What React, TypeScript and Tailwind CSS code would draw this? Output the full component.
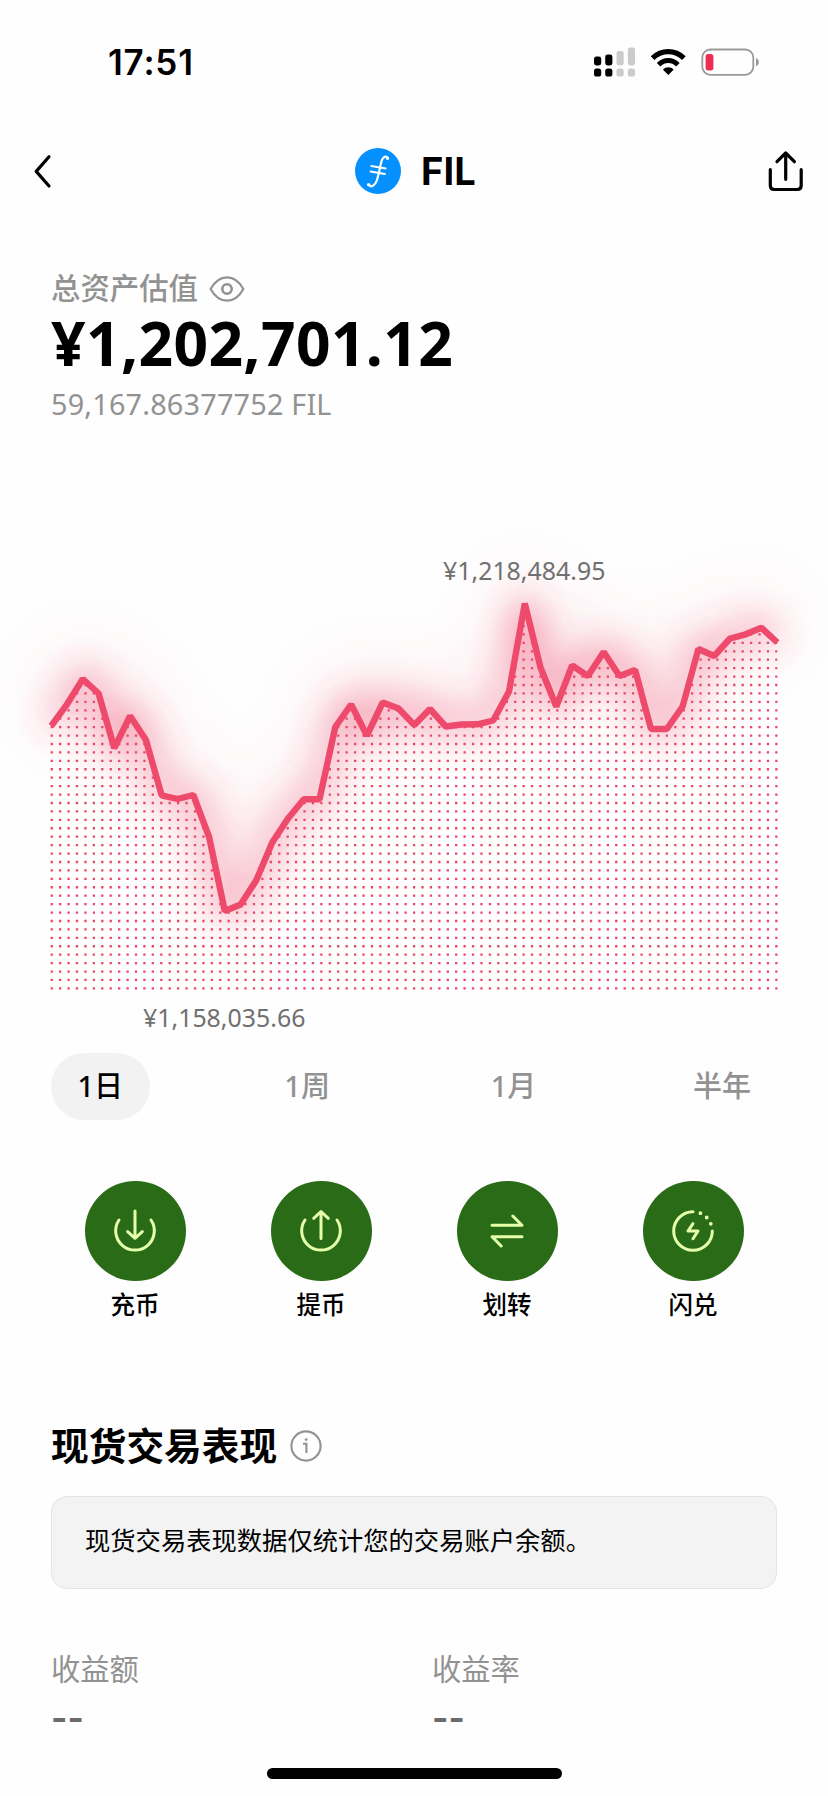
import type { ReactNode } from 'react';

const LEVELS = [
  726, 704.3, 679, 693.5, 748, 716, 740, 795.3, 799, 795, 837, 911, 904.5, 880, 842.5, 818.5,
  799.3, 799.3, 727, 704.5, 735.5, 702.5, 708.5, 725, 709, 726.5, 724.5, 724.3, 720.5, 691.5, 603.5, 667.5,
  706.5, 665.5, 676, 652, 676, 670, 729, 729, 706.5, 649, 656, 638.5, 634.3, 627.8, 642.5,
];
const TOP = 440;
const points = LEVELS.map((y, i) => `${(51.2 + i * 15.785).toFixed(1)},${y - TOP}`);
const line = 'M' + points.join('L');
const area = `${line}L780,552L48,552L48,286Z`;

function Chart() {
  const rows = Array.from({ length: 46 }, (_, i) => 548.4 - i * 8.428);
  return (
    <svg className="block h-[580px] w-[828px]" viewBox="0 0 828 580" fill="none">
      <defs>
        <filter id="glow" filterUnits="userSpaceOnUse" x="-100" y="-100" width="1028" height="800">
          <feGaussianBlur stdDeviation="18" />
        </filter>
        <filter id="haze" filterUnits="userSpaceOnUse" x="-140" y="-140" width="1108" height="900">
          <feGaussianBlur stdDeviation="36" />
        </filter>
        <clipPath id="below">
          <path d={area} />
        </clipPath>
      </defs>
      <path d={line} transform="translate(0 -14)" stroke="#ee4a6c" strokeWidth="9" filter="url(#haze)" opacity="0.5" />
      <path d={line} transform="translate(0 -2)" stroke="#ee4a6c" strokeWidth="9" filter="url(#glow)" opacity="0.9" />
      <g clipPath="url(#below)" stroke="#ec4668" strokeWidth="2.3">
        {rows.map((y) => (
          <path key={y} d={`M50.6 ${y}H778`} strokeDasharray="2.3 6.126" />
        ))}
      </g>
      <path d={line} stroke="#ee4a6c" strokeWidth="6.4" strokeLinejoin="bevel" />
    </svg>
  );
}

function StatusIcons() {
  return (
    <svg className="h-8 w-[170px]" viewBox="592 45.5 170 32" fill="none">
      <rect x="594" y="56" width="7.2" height="9" rx="2.4" fill="#000" />
      <rect x="605.2" y="54" width="7.2" height="11" rx="2.4" fill="#000" />
      <rect x="616.5" y="50.6" width="7.2" height="14.2" rx="2.4" fill="#cbcbcb" />
      <rect x="627.8" y="47" width="7.2" height="18" rx="2.4" fill="#cbcbcb" />
      <rect x="594" y="68" width="7.2" height="8" rx="2.6" fill="#000" />
      <rect x="605.2" y="68" width="7.2" height="8" rx="2.6" fill="#000" />
      <rect x="616.5" y="68" width="7.2" height="8" rx="2.6" fill="#cbcbcb" />
      <rect x="627.8" y="68" width="7.2" height="8" rx="2.6" fill="#cbcbcb" />
      <path d="M652.6 57.6C661.5 49 675 49 683.9 57.6" stroke="#000" strokeWidth="5.2" />
      <path d="M658.6 64.2C664.2 58.7 672.3 58.7 677.9 64.2" stroke="#000" strokeWidth="5" />
      <path d="M663 69.2C666 66 670.7 66 673.6 69.2L668.3 74.5Z" fill="#000" />
      <rect x="702.3" y="49" width="51" height="25.3" rx="8" stroke="#999" strokeWidth="1.8" />
      <rect x="705.6" y="53.5" width="7.8" height="16.4" rx="2.6" fill="#ee2d52" />
      <path d="M756 57.5C759.8 59 759.8 64.4 756 65.8Z" fill="#999" />
    </svg>
  );
}

function FilLogo() {
  return (
    <svg className="size-[46px]" viewBox="0 0 46 46" fill="none" stroke="#fff" strokeLinecap="round">
      <circle cx="23" cy="23" r="23" fill="#0590ff" stroke="none" />
      <path
        d="M33 10.4C31.8 7.6 28.2 8 26.6 13C25 18.5 23.6 27 21.8 32.5C20.2 37.5 16.2 40 13.2 36.8"
        strokeWidth="2.2"
      />
      <path d="M32.8 10.4h-.6M13.4 36.6h.6" strokeWidth="2.8" />
      <path d="M16.3 18L30.6 20.5M15.6 23.5L29.9 26" strokeWidth="1.8" />
    </svg>
  );
}

function Tab({ label, active }: { label: string; active?: boolean }) {
  return (
    <button
      className={
        active
          ? 'h-[67px] rounded-full bg-[#f2f2f2] px-[26.5px] pb-px text-[29px] font-medium text-black'
          : 'h-[67px] px-[26px] pb-px text-[29px] font-medium text-[#929292]'
      }
    >
      {label}
    </button>
  );
}

function Action({ label, children }: { label: string; children: ReactNode }) {
  return (
    <div className="flex w-[186px] flex-col items-center">
      <div className="flex size-[101px] items-center justify-center rounded-full bg-[#2a6b17]">
        <svg
          className="size-[50px]"
          viewBox="-25 -25 50 50"
          fill="none"
          stroke="#e5ffab"
          strokeWidth="3"
          strokeLinecap="round"
          strokeLinejoin="round"
        >
          {children}
        </svg>
      </div>
      <span className="mt-[6px] text-[24.5px] leading-9 font-medium">{label}</span>
    </div>
  );
}

function Metric({ label }: { label: string }) {
  return (
    <div className="flex flex-col">
      <span className="text-[29.3px] leading-10 text-[#929292]">{label}</span>
      <span className="mt-2 font-['Inter',sans-serif] text-[35px] leading-10 font-bold tracking-[0.2px] text-[#6c6c6c] [font-feature-settings:'calt'_0]">
        --
      </span>
    </div>
  );
}

export default function App() {
  return (
    <main className="flex h-[1796px] w-[828px] flex-col overflow-hidden bg-[#fefefe] font-['Noto_Sans','Noto_Sans_CJK_SC',sans-serif] text-black">
      <div className="flex h-[124px] shrink-0 items-center justify-between pr-[66px] pl-[108px]">
        <span className="font-['Inter',sans-serif] text-[35px] leading-none font-semibold tracking-[0.8px]">
          17:51
        </span>
        <StatusIcons />
      </div>

      <header className="grid h-[93px] shrink-0 grid-cols-[1fr_auto_1fr] items-center pr-6 pl-8">
        <svg className="h-9 w-5" viewBox="0 0 20 36" fill="none" stroke="#000" strokeWidth="3.2" strokeLinecap="round" strokeLinejoin="round">
          <path d="M17 3.8L4.2 18.4L17 33" />
        </svg>
        <div className="flex items-center gap-5 pr-[5px]">
          <FilLogo />
          <span className="font-['Inter',sans-serif] text-[38px] leading-none font-bold tracking-[0.1px]">FIL</span>
        </div>
        <svg className="mb-px h-11 w-9 justify-self-end" viewBox="0 0 36 44" fill="none" stroke="#000" strokeWidth="3.2" strokeLinecap="round" strokeLinejoin="round">
          <path d="M2.3 21.7V37.5Q2.3 41.5 6.3 41.5H29.2Q33.2 41.5 33.2 37.5V21.7M17.7 31.3V5M9 13.7L17.7 5L26.4 13.7" />
        </svg>
      </header>

      <section className="flex h-[223px] shrink-0 flex-col items-start pt-[51px] pl-[51px]">
        <div className="flex h-10 items-center gap-[11px] text-[29.4px] leading-10 font-medium text-[#929292]">
          <span>总资产估值</span>
          <svg className="mt-px h-7 w-9" viewBox="0 0 36 28" fill="none" stroke="#929292" strokeWidth="2.2">
            <path d="M1.6 14C6 6 12 2.3 18 2.3S30 6 34.4 14C30 22 24 25.7 18 25.7S6 22 1.6 14Z" strokeLinejoin="round" />
            <circle cx="18" cy="14" r="4.7" strokeWidth="2.6" />
          </svg>
        </div>
        <div className="text-[60.5px] leading-[70px] font-bold tracking-[0.35px]">¥1,202,701.12</div>
        <div className="mt-[6px] text-[28.8px] leading-10 tracking-[0.2px] text-[#929292]">59,167.86377752 FIL</div>
      </section>

      <section className="relative h-[580px] shrink-0 text-[24.9px] leading-8 text-[#707070]">
        <Chart />
        <span className="absolute top-[114px] left-[443px]">¥1,218,484.95</span>
        <span className="absolute top-[561px] left-[143px]">¥1,158,035.66</span>
      </section>

      <nav className="mx-[51px] mt-[33px] flex h-[67px] shrink-0 justify-between">
        <Tab label="1日" active />
        <div className="flex pl-1">
          <Tab label="1周" />
        </div>
        <div className="flex pl-1">
          <Tab label="1月" />
        </div>
        <Tab label="半年" />
      </nav>

      <section className="mt-[61px] flex h-[142px] shrink-0 justify-center">
        <Action label="充币">
          <path d="M-16 -11A19.3 19.3 0 1 0 16 -11M0 -20V7.3M-7.3 .6L0 7.3L7.3 .6" />
        </Action>
        <Action label="提币">
          <path d="M-16 -11A19.3 19.3 0 1 0 16 -11M0 7.5V-19.5M-7.3 -12.7L0 -19.5L7.3 -12.7" />
        </Action>
        <Action label="划转">
          <path d="M-15 -5.7H15L5.8 -15M15 5.7H-15L-5.8 15" />
        </Action>
        <Action label="闪兑">
          <path d="M0 -19.3A19.3 19.3 0 1 0 19.3 0" />
          <path d="M7.4 -17.8h.01M13.7 -13.5h.01M17.8 -7.2h.01" strokeWidth="3.8" />
          <path d="M0 -7.3L-5 0H5L0 7.7" />
        </Action>
      </section>

      <section className="flex flex-col px-[51px] pt-[99px]">
        <div className="flex h-12 items-center gap-[13px]">
          <h2 className="text-[37.7px] leading-[48px] font-bold">现货交易表现</h2>
          <svg className="size-8" viewBox="0 0 32 32" fill="none" stroke="#929292" strokeWidth="2.1">
            <circle cx="16" cy="16" r="14.6" />
            <path d="M13 13.8H16.4V23" />
            <circle cx="16.2" cy="9.6" r="1.4" fill="#929292" stroke="none" />
          </svg>
        </div>
        <div className="mt-[26px] flex h-[93px] items-center rounded-2xl border border-[#e3e3e3] bg-[#f3f3f3] pb-[3px] pl-[33px] text-[25.3px]">
          现货交易表现数据仅统计您的交易账户余额。
        </div>
        <div className="mt-[60px] grid grid-cols-[381px_1fr]">
          <Metric label="收益额" />
          <Metric label="收益率" />
        </div>
      </section>

      <div className="mt-auto mb-[17px] ml-[1px] h-[11px] w-[295px] shrink-0 self-center rounded-full bg-black" />
    </main>
  );
}
